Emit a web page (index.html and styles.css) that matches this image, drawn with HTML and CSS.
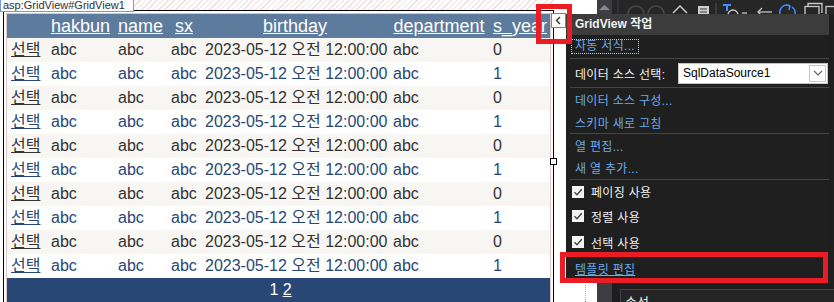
FILE: index.html
```html
<!DOCTYPE html>
<html lang="ko">
<head>
    <meta charset="UTF-8">
    <meta name="viewport" content="width=device-width, initial-scale=1.0">
    <link rel="stylesheet" href="styles.css">
    <title>GridView 디자인</title>
</head>
<body>
    <div class="surface">
        <div class="designer">
            <div class="strip">
                <div class="tag">asp:GridView#GridView1</div>
                <div class="hatch"></div>
            </div>
            <div class="frame">
                <div class="grid-box">
                    <table class="grid">
                        <colgroup>
                            <col class="c-sel"><col class="c-hak"><col class="c-name"><col class="c-sx">
                            <col class="c-birth"><col class="c-dept"><col class="c-year">
                        </colgroup>
                        <thead>
                            <tr class="head">
                                <th></th>
                                <th><a>hakbun</a></th>
                                <th><a>name</a></th>
                                <th><a>sx</a></th>
                                <th><a>birthday</a></th>
                                <th><a>department</a></th>
                                <th><a>s_year</a></th>
                            </tr>
                        </thead>
                        <tbody>
                            <tr class="row"><td><a>선택</a></td><td>abc</td><td>abc</td><td>abc</td><td>2023-05-12 오전 12:00:00</td><td>abc</td><td>0</td></tr>
                            <tr class="alt"><td><a>선택</a></td><td>abc</td><td>abc</td><td>abc</td><td>2023-05-12 오전 12:00:00</td><td>abc</td><td>1</td></tr>
                            <tr class="row"><td><a>선택</a></td><td>abc</td><td>abc</td><td>abc</td><td>2023-05-12 오전 12:00:00</td><td>abc</td><td>0</td></tr>
                            <tr class="alt"><td><a>선택</a></td><td>abc</td><td>abc</td><td>abc</td><td>2023-05-12 오전 12:00:00</td><td>abc</td><td>1</td></tr>
                            <tr class="row"><td><a>선택</a></td><td>abc</td><td>abc</td><td>abc</td><td>2023-05-12 오전 12:00:00</td><td>abc</td><td>0</td></tr>
                            <tr class="alt"><td><a>선택</a></td><td>abc</td><td>abc</td><td>abc</td><td>2023-05-12 오전 12:00:00</td><td>abc</td><td>1</td></tr>
                            <tr class="row"><td><a>선택</a></td><td>abc</td><td>abc</td><td>abc</td><td>2023-05-12 오전 12:00:00</td><td>abc</td><td>0</td></tr>
                            <tr class="alt"><td><a>선택</a></td><td>abc</td><td>abc</td><td>abc</td><td>2023-05-12 오전 12:00:00</td><td>abc</td><td>1</td></tr>
                            <tr class="row"><td><a>선택</a></td><td>abc</td><td>abc</td><td>abc</td><td>2023-05-12 오전 12:00:00</td><td>abc</td><td>0</td></tr>
                            <tr class="alt"><td><a>선택</a></td><td>abc</td><td>abc</td><td>abc</td><td>2023-05-12 오전 12:00:00</td><td>abc</td><td>1</td></tr>
                            <tr class="pager"><td colspan="7">1 <a>2</a></td></tr>
                        </tbody>
                    </table>
                </div>
            </div>
        </div>
        <div class="gutter"><div class="dots"></div></div>
    </div>

    <div class="ide">
        <div class="vscroll">
            <svg width="15" height="14" viewBox="0 0 15 14"><polygon points="2,10 7.5,5 13,10" fill="#8a8a8a"/></svg>
        </div>
        <div class="ide-main">
            <div class="toolbar">
                <svg width="222" height="14" viewBox="0 0 222 14">
                    <line x1="6" y1="0" x2="6" y2="14" stroke="#3f3f46"/>
                    <circle cx="24" cy="14" r="8" fill="none" stroke="#4a4a4a" stroke-width="1.5"/>
                    <circle cx="44" cy="14" r="8" fill="none" stroke="#4a4a4a" stroke-width="1.5"/>
                    <polyline points="61,13 68,6 75,13" fill="none" stroke="#c8c8c8" stroke-width="1.5"/>
                    <rect x="86" y="6" width="11" height="8" fill="#d0d0d0"/>
                    <line x1="88" y1="9" x2="95" y2="9" stroke="#333" />
                    <line x1="88" y1="12" x2="95" y2="12" stroke="#333" />
                    <line x1="104" y1="3" x2="104" y2="14" stroke="#555"/>
                    <line x1="111" y1="5" x2="119" y2="5" stroke="#3794ff" stroke-width="2"/>
                    <line x1="115" y1="5" x2="115" y2="11" stroke="#3794ff" stroke-width="2"/>
                    <circle cx="121" cy="15" r="5" fill="none" stroke="#c8c8c8" stroke-width="1.3"/>
                    <line x1="130" y1="13" x2="135" y2="13" stroke="#c8c8c8" stroke-width="1.3"/>
                    <line x1="146" y1="12" x2="160" y2="12" stroke="#c8c8c8" stroke-width="1.3"/>
                    <polyline points="150,8 146,12 150,16" fill="none" stroke="#c8c8c8" stroke-width="1.3"/>
                    <path d="M168 14 A7 7 0 0 1 178 6" fill="none" stroke="#3794ff" stroke-width="1.5"/>
                    <polyline points="174,5 178,6 177,10" fill="none" stroke="#3794ff" stroke-width="1.5"/>
                    <path d="M180 7 A7 7 0 0 1 183 14" fill="none" stroke="#3794ff" stroke-width="1.5"/>
                    <rect x="193" y="6.5" width="14" height="9" fill="none" stroke="#c8c8c8" stroke-width="1.3"/>
                    <polyline points="196,6 196,3.5 210,3.5 210,13" fill="none" stroke="#c8c8c8" stroke-width="1.3"/>
                    <rect x="214" y="6.5" width="9" height="9" fill="none" stroke="#c8c8c8" stroke-width="1.3"/>
                </svg>
            </div>
            <div class="ide-fill"></div>
            <div class="props">속성</div>
        </div>
    </div>

    <div class="smart-tag">
        <svg width="13" height="13" viewBox="0 0 13 13"><polyline points="8,3 4.5,6.5 8,10" fill="none" stroke="#333" stroke-width="1.4"/></svg>
    </div>
    <div class="handle"></div>

    <div class="tasks">
        <div class="tasks-head">GridView 작업</div>
        <div class="tasks-row auto"><span class="focus link">자동 서식...</span></div>
        <div class="sep"></div>
        <div class="tasks-row pick">
            <span>데이터 소스 선택:</span>
            <div class="combo">
                <span class="combo-text">SqlDataSource1</span>
                <span class="combo-btn">
                    <svg width="10" height="6" viewBox="0 0 10 6"><polyline points="1,1 5,5 9,1" fill="none" stroke="#666" stroke-width="1.2"/></svg>
                </span>
            </div>
        </div>
        <div class="sep"></div>
        <div class="tasks-row link h23">데이터 소스 구성...</div>
        <div class="tasks-row link h22">스키마 새로 고침</div>
        <div class="sep"></div>
        <div class="tasks-row link h22">열 편집...</div>
        <div class="tasks-row link h23">새 열 추가...</div>
        <div class="sep"></div>
        <div class="tasks-row check h23"><span class="box"><svg width="12" height="12" viewBox="0 0 12 12"><polyline points="2.5,6.2 5,8.7 9.8,3.2" fill="none" stroke="#444" stroke-width="1.4"/></svg></span>페이징 사용</div>
        <div class="tasks-row check h26"><span class="box"><svg width="12" height="12" viewBox="0 0 12 12"><polyline points="2.5,6.2 5,8.7 9.8,3.2" fill="none" stroke="#444" stroke-width="1.4"/></svg></span>정렬 사용</div>
        <div class="tasks-row check h26"><span class="box"><svg width="12" height="12" viewBox="0 0 12 12"><polyline points="2.5,6.2 5,8.7 9.8,3.2" fill="none" stroke="#444" stroke-width="1.4"/></svg></span>선택 사용</div>
        <div class="tasks-row link h26"><span class="under">템플릿 편집</span></div>
    </div>

    <div class="mark mark-tag"></div>
    <div class="mark mark-tpl"></div>
</body>
</html>
```

FILE: styles.css
```css
body {
    margin: 0;
    width: 834px;
    height: 302px;
    overflow: hidden;
    position: relative;
    display: flex;
    background-color: #252526;
    font-family: "Liberation Sans", "Noto Sans CJK KR", sans-serif;
}

/* design surface */
.surface {
    width: 597px;
    display: flex;
    background-color: white;
}

.designer {
    width: 554px;
}

.strip {
    display: flex;
    height: 10px;
}

.tag {
    width: 134px;
    height: 12px;
    box-sizing: border-box;
    border: 1px solid #7a9cd6;
    border-top: 0;
    background-color: #fbfcff;
    color: #333;
    font-size: 11px;
    line-height: 9px;
    padding: 1px 0 0 2px;
    white-space: nowrap;
    overflow: hidden;
    position: relative;
    z-index: 1;
}

.hatch {
    flex: 1;
    background: repeating-linear-gradient(135deg, #f1dede 0 1px, #ffffff 1px 4px);
}

.frame {
    margin-left: 3px;
    width: 551px;
    height: 292px;
    box-sizing: border-box;
    border: 1px solid black;
    border-bottom: 0;
    padding: 2px 2px 0 2px;
}

.grid-box {
    border: 1px solid #e2c6c6;
    border-bottom: 0;
    height: 300px;
}

.grid {
    width: 543px;
    table-layout: fixed;
    border-collapse: collapse;
    font-size: 16px;
    white-space: nowrap;
}

.c-sel { width: 40px; }
.c-hak { width: 67px; }
.c-name { width: 53px; }
.c-sx { width: 34px; }
.c-birth { width: 188px; }
.c-dept { width: 100px; }
.c-year { width: 61px; }

.grid th, .grid td {
    padding: 0 4px;
    height: 24px;
    line-height: 24px;
    text-align: left;
    overflow: visible;
}

.grid a {
    text-decoration: underline;
}

.head {
    background-color: #5d7b9d;
    color: white;
}

.head th {
    font-size: 18px;
    font-weight: normal;
    text-align: center;
}

.row {
    background-color: #f7f6f3;
    color: #333333;
}

.alt {
    background-color: white;
    color: #284775;
}

.pager {
    background-color: #284775;
    color: white;
}

.grid .pager td {
    text-align: center;
    padding-left: 8px;
}

.gutter {
    flex: 1;
    padding-top: 285px;
}

.dots {
    margin-left: 31px;
    height: 17px;
    border-left: 1px dotted #a8a8a8;
}

/* ide side */
.ide {
    flex: 1;
    display: flex;
}

.vscroll {
    width: 15px;
    background-color: #3e3e42;
}

.vscroll svg {
    display: block;
}

.ide-main {
    flex: 1;
    display: flex;
    flex-direction: column;
    background-color: #1e1e1e;
}

.toolbar {
    height: 14px;
    background-color: #262627;
}

.toolbar svg {
    display: block;
}

.ide-fill {
    flex: 1;
}

.props {
    margin-left: 8px;
    height: 12px;
    border-top: 1px solid #434346;
    border-left: 1px solid #434346;
    background-color: #252526;
    color: #f1f1f1;
    font-size: 13px;
    line-height: 26px;
    padding-left: 4px;
    overflow: hidden;
}

/* overlays */
.smart-tag {
    position: absolute;
    left: 551px;
    top: 13px;
    width: 15px;
    height: 15px;
    box-sizing: border-box;
    border: 1px solid #4f8fd8;
    background-color: white;
    display: flex;
    align-items: center;
    justify-content: center;
}

.handle {
    position: absolute;
    left: 550px;
    top: 158px;
    width: 7px;
    height: 7px;
    box-sizing: border-box;
    border: 1px solid black;
    background-color: white;
}

.tasks {
    position: absolute;
    left: 566px;
    top: 14px;
    width: 263px;
    height: 269px;
    background-color: #1f1f1f;
    color: #f1f1f1;
    font-size: 12px;
    letter-spacing: 0.3px;
}

.tasks-head {
    height: 21px;
    line-height: 21px;
    background-color: #3c3c3c;
    font-weight: bold;
    padding-left: 9px;
    letter-spacing: 0;
}

.tasks-row {
    padding-left: 9px;
    display: flex;
    align-items: center;
}

.link {
    color: #6aaae6;
}

.auto {
    height: 23px;
    padding-left: 5px;
}

.focus {
    border: 1px dotted #c8c8c8;
    padding: 0 3px;
    line-height: 13px;
}

.sep {
    height: 1px;
    margin-left: 4px;
    background-color: #454545;
}

.pick {
    height: 28px;
}

.combo {
    margin-left: auto;
    margin-right: 1px;
    width: 150px;
    height: 21px;
    box-sizing: border-box;
    border: 1px solid #c4c4c4;
    background-color: white;
    color: black;
    letter-spacing: 0;
    display: flex;
    align-items: center;
    justify-content: space-between;
    padding-left: 4px;
    padding-right: 1px;
}

.combo-btn {
    width: 17px;
    height: 17px;
    box-sizing: border-box;
    border: 1px solid #c8c8c8;
    display: flex;
    align-items: center;
    justify-content: center;
}

.h22 { height: 22px; }
.h23 { height: 23px; }
.h26 { height: 26px; }

.check {
    padding-left: 6px;
}

.box {
    width: 12px;
    height: 12px;
    background-color: #f4f4f4;
    margin-right: 7px;
}

.box svg {
    display: block;
}

.under {
    text-decoration: underline;
}

.mark {
    position: absolute;
    border: 5px solid #ec1c24;
    box-sizing: border-box;
}

.mark-tag {
    left: 536px;
    top: 4px;
    width: 36px;
    height: 40px;
}

.mark-tpl {
    left: 560px;
    top: 252px;
    width: 268px;
    height: 31px;
}
```
